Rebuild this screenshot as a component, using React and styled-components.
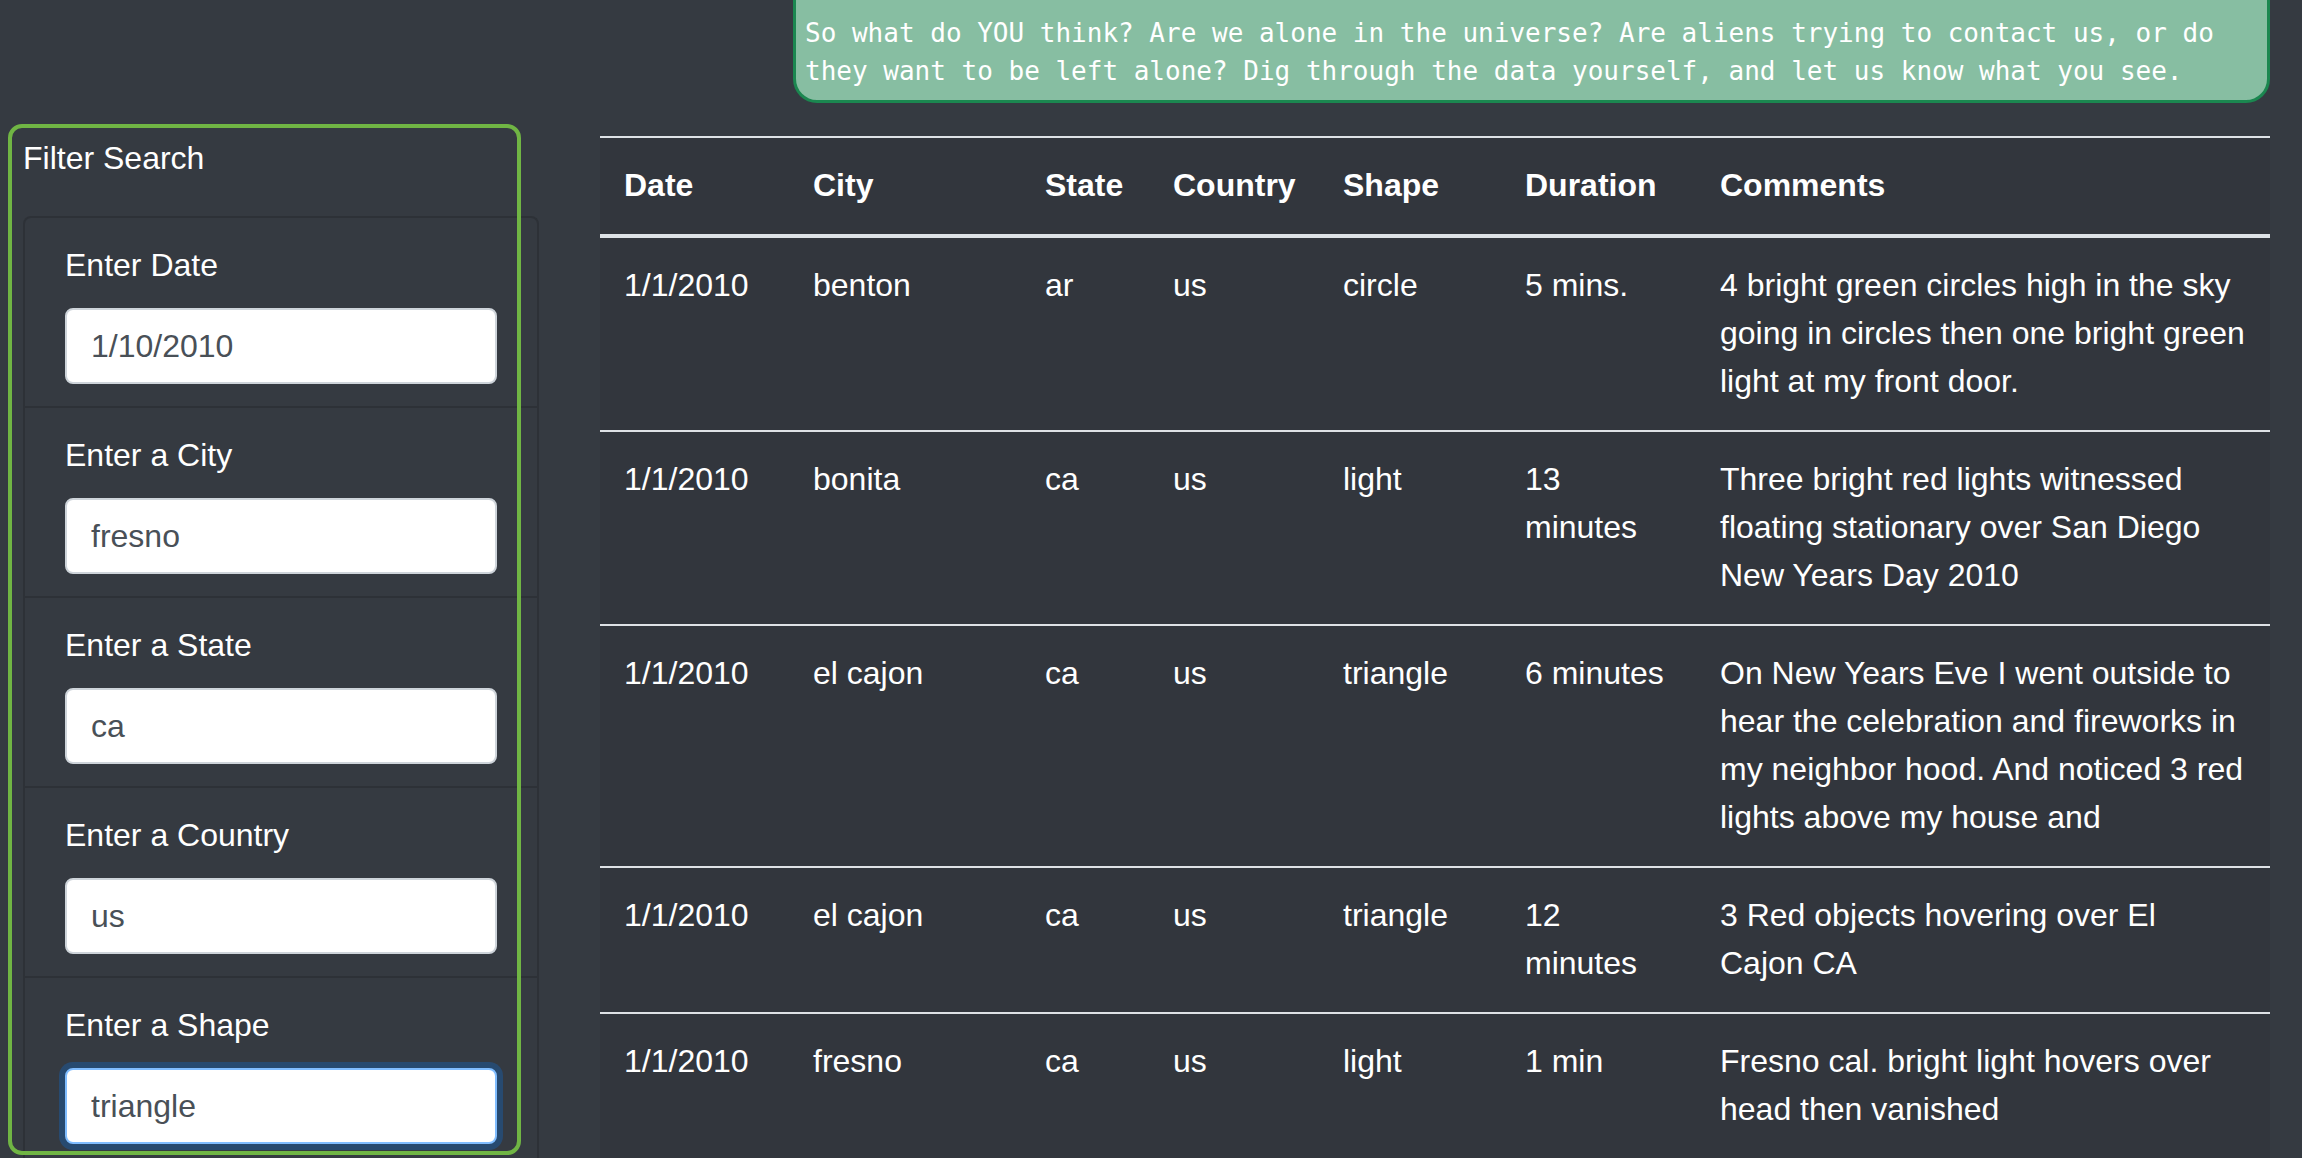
import React from "react";
import styled, { createGlobalStyle } from "styled-components";

const GlobalStyle = createGlobalStyle`
  html, body {
    margin: 0;
    padding: 0;
    overflow: hidden;
    background: #353a41;
  }
  body {
    font-family: "Liberation Sans", Arial, Helvetica, sans-serif;
    color: #fff;
  }
  * {
    box-sizing: border-box;
  }
`;

const Page = styled.div`
  display: flex;
  flex-direction: column;
  padding: 0 32px 0 8px;
  height: 1158px;
`;

const TopBar = styled.div`
  display: flex;
  justify-content: flex-end;
`;

const Notice = styled.p`
  margin: 0;
  width: 1477px;
  padding: 14px 9px 10px;
  background: #87bea2;
  border: 3px solid #1b8750;
  border-top: none;
  border-radius: 0 0 24px 24px;
  font-family: "DejaVu Sans Mono", "Liberation Mono", monospace;
  font-size: 26px;
  line-height: 38px;
  color: #fff;
`;

const Content = styled.div`
  display: grid;
  grid-template-columns: 513px 1fr;
  column-gap: 79px;
  align-items: start;
  margin-top: 21px;
`;

// green outline is drawn on top so the overflowing list doesn't cut it
const FilterPanel = styled.aside`
  position: relative;
  height: 1031px;
  padding: 10px 0 0 15px;

  &::after {
    content: "";
    position: absolute;
    inset: 0;
    border: 4px solid #70b544;
    border-radius: 14px;
    pointer-events: none;
  }
`;

const PanelTitle = styled.h2`
  margin: 0 0 34px;
  font-size: 32px;
  line-height: 48px;
  font-weight: normal;
  color: #fff;
`;

const FilterList = styled.ul`
  list-style: none;
  margin: 0;
  padding: 0;
  width: 516px;
  border: 2px solid #2d3137;
  border-bottom: none;
  border-radius: 8px 8px 0 0;
`;

const FilterItem = styled.li`
  padding: 23px 40px 22px;
  border-bottom: 2px solid #2d3137;
`;

const Label = styled.label`
  display: block;
  margin-bottom: 19px;
  font-size: 32px;
  line-height: 48px;
  color: #fff;
`;

const Input = styled.input`
  display: block;
  width: 100%;
  height: 76px;
  padding: 12px 24px;
  border: 2px solid ${(p) => (p.$focused ? "#80bdff" : "#ced4da")};
  border-radius: 8px;
  background: #fff;
  font-family: "Liberation Sans", Arial, sans-serif;
  font-size: 32px;
  line-height: 48px;
  color: #495057;
  outline: none;
  box-shadow: ${(p) =>
    p.$focused ? "0 0 0 6px rgba(0, 123, 255, 0.25)" : "none"};
`;

const TableWrap = styled.div`
  margin-top: 12px;
`;

const Table = styled.table`
  width: 100%;
  table-layout: fixed;
  border-collapse: collapse;
  background: #32363d;
  color: #fff;
  font-size: 32px;
  line-height: 48px;
`;

const Th = styled.th`
  width: ${(p) => p.$w}px;
  padding: 23px 24px 25px;
  text-align: left;
  font-weight: bold;
  vertical-align: bottom;
  border-top: 2px solid #dee2e6;
  border-bottom: 4px solid #dee2e6;
`;

const Td = styled.td`
  padding: 23px 24px 25px;
  vertical-align: top;
  border-top: 2px solid #dee2e6;
`;

const filters = [
  { label: "Enter Date", value: "1/10/2010" },
  { label: "Enter a City", value: "fresno" },
  { label: "Enter a State", value: "ca" },
  { label: "Enter a Country", value: "us" },
  { label: "Enter a Shape", value: "triangle", focused: true },
];

const columns = [
  { name: "Date", w: 189 },
  { name: "City", w: 232 },
  { name: "State", w: 128 },
  { name: "Country", w: 170 },
  { name: "Shape", w: 182 },
  { name: "Duration", w: 195 },
  { name: "Comments", w: 574 },
];

const sightings = [
  ["1/1/2010", "benton", "ar", "us", "circle", "5 mins.",
    "4 bright green circles high in the sky going in circles then one bright green light at my front door."],
  ["1/1/2010", "bonita", "ca", "us", "light", "13 minutes",
    "Three bright red lights witnessed floating stationary over San Diego New Years Day 2010"],
  ["1/1/2010", "el cajon", "ca", "us", "triangle", "6 minutes",
    "On New Years Eve I went outside to hear the celebration and fireworks in my neighbor hood. And noticed 3 red lights above my house and"],
  ["1/1/2010", "el cajon", "ca", "us", "triangle", "12 minutes",
    "3 Red objects hovering over El Cajon CA"],
  ["1/1/2010", "fresno", "ca", "us", "light", "1 min",
    "Fresno cal. bright light hovers over head then vanished"],
];

export default function App() {
  return (
    <>
      <GlobalStyle />
      <Page>
        <TopBar>
          <Notice>
            So what do YOU think? Are we alone in the universe? Are aliens
            trying to contact us, or do they want to be left alone? Dig through
            the data yourself, and let us know what you see.
          </Notice>
        </TopBar>
        <Content>
          <FilterPanel>
            <PanelTitle>Filter Search</PanelTitle>
            <FilterList>
              {filters.map((f) => (
                <FilterItem key={f.label}>
                  <Label>{f.label}</Label>
                  <Input defaultValue={f.value} $focused={f.focused} />
                </FilterItem>
              ))}
            </FilterList>
          </FilterPanel>
          <TableWrap>
            <Table>
              <thead>
                <tr>
                  {columns.map((c) => (
                    <Th key={c.name} $w={c.w}>
                      {c.name}
                    </Th>
                  ))}
                </tr>
              </thead>
              <tbody>
                {sightings.map((row, i) => (
                  <tr key={i}>
                    {row.map((cell, j) => (
                      <Td key={j}>{cell}</Td>
                    ))}
                  </tr>
                ))}
              </tbody>
            </Table>
          </TableWrap>
        </Content>
      </Page>
    </>
  );
}
